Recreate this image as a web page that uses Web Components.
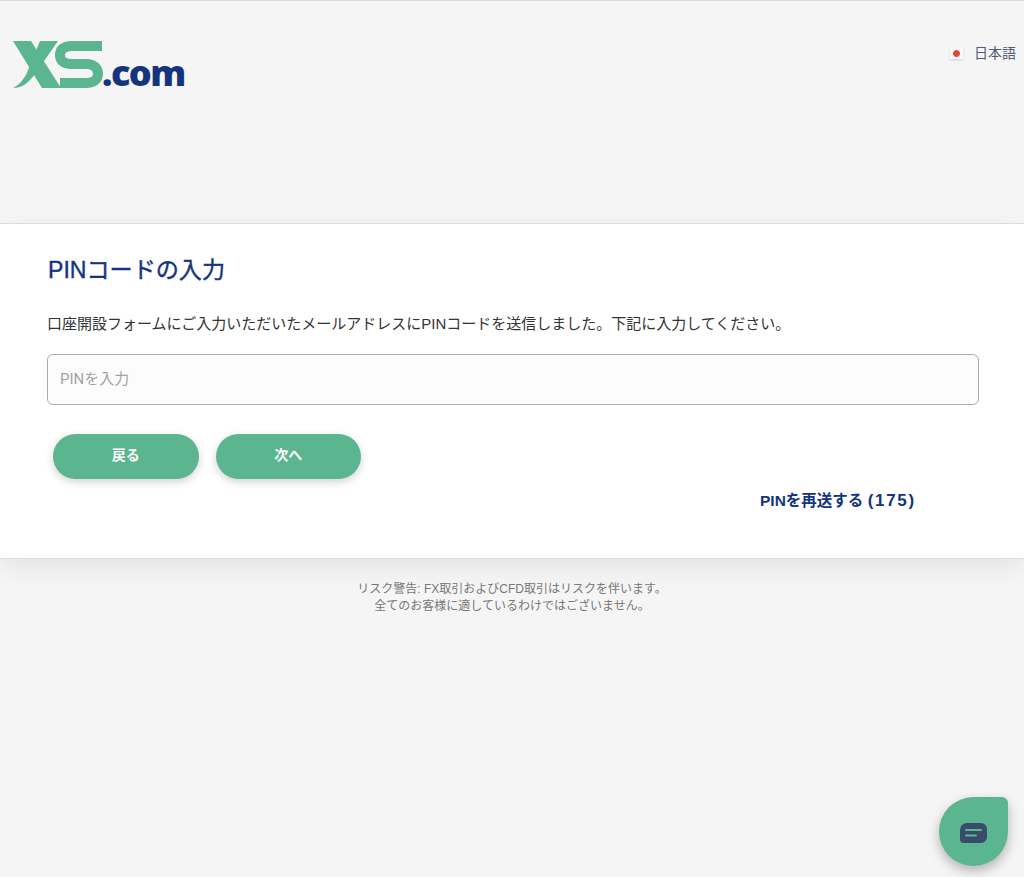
<!DOCTYPE html>
<html lang="ja">
<head>
<meta charset="utf-8">
<title>PIN</title>
<style>
  html, body { margin: 0; height: 100%; }
  body {
    background: #f5f5f5;
    font-family: "Liberation Sans", "Noto Sans CJK JP", sans-serif;
    overflow: hidden;
  }
</style>
</head>
<body>
<site-header></site-header>
<pin-card></pin-card>
<risk-note>
  <div>リスク警告: FX取引およびCFD取引はリスクを伴います。</div>
  <div>全てのお客様に適しているわけではございません。</div>
</risk-note>
<chat-launcher></chat-launcher>

<script>
class SiteHeader extends HTMLElement {
  constructor() {
    super();
    this.attachShadow({mode: 'open'}).innerHTML = `
      <style>
        :host {
          display: flex;
          justify-content: space-between;
          align-items: flex-start;
          box-sizing: border-box;
          height: 223px;
          border-top: 1px solid #dcdcdc;
          padding: 39px 8px 0 13px;
        }
        .logo { display: flex; align-items: flex-end; height: 50px; }
        .logo svg { display: block; }
        .com {
          font: 800 36px/1 "Open Sans", sans-serif;
          letter-spacing: -1.500px;
          color: #14357e;
          margin: 0 0 -1px -1px;
        }
        .lang {
          display: flex;
          align-items: center;
          gap: 11px;
          margin-top: 4px;
          font-size: 14px;
          line-height: 18px;
          color: #4f5b78;
        }
        .flag {
          width: 13px;
          height: 11px;
          background: radial-gradient(circle at center, #e8443e 0 3px, #fafafa 3.800px);
          box-shadow: 0 1px 2px rgba(0, 0, 0, .16);
        }
      </style>
      <div class="logo">
        <svg width="90" height="50" viewBox="0 0 90 50" role="img" aria-label="XS">
          <g fill="#5bb58f">
            <path d="M0 1H18L48 48H29Z"/>
            <path d="M27 1H45L22 34C16 42 10 48 0 48C6 45 9 41 13 35Z"/>
          </g>
          <path fill="none" stroke="#5bb58f" stroke-width="10" d="M89 6H59C50 6 47 10 47 15C47 21 51 24 59 24H73C81 24 85 28 85 34C85 39 81 43 73 43H47"/>
        </svg>
        <span class="com">.com</span>
      </div>
      <div class="lang"><span class="flag"></span><span>日本語</span></div>
    `;
  }
}

class GreenButton extends HTMLElement {
  constructor() {
    super();
    this.attachShadow({mode: 'open'}).innerHTML = `
      <style>
        :host {
          display: flex;
          align-items: center;
          justify-content: center;
          box-sizing: border-box;
          width: 145.500px;
          height: 45px;
          padding-bottom: 5px;
          border-radius: 23px;
          background: #5bb58f;
          color: #fff;
          font-size: 14px;
          font-weight: 700;
          box-shadow: 0 3px 8px rgba(0, 0, 0, .18);
          cursor: pointer;
        }
      </style>
      <slot></slot>
    `;
  }
}

class PinCard extends HTMLElement {
  constructor() {
    super();
    this.attachShadow({mode: 'open'}).innerHTML = `
      <style>
        :host {
          display: block;
          box-sizing: border-box;
          height: 336px;
          padding: 31px 45px 0 47px;
          background: #fff;
          border-top: 1px solid #dcdcdc;
          border-bottom: 1px solid #dcdcdc;
          box-shadow: 0 8px 24px rgba(0, 0, 0, .07);
        }
        h1 {
          margin: 0 0 0 1px;
          font-size: 23.100px;
          line-height: 30px;
          font-weight: 400;
          color: #14357e;
          -webkit-text-stroke: .4px #14357e;
        }
        p {
          margin: 27px 0 0;
          font-size: 15px;
          line-height: 24px;
          color: #333;
          white-space: nowrap;
        }
        input {
          display: block;
          box-sizing: border-box;
          width: 100%;
          height: 51px;
          margin-top: 18px;
          padding: 0 12px 1px;
          border: 1px solid #ababab;
          border-radius: 6px;
          background: #fcfcfc;
          font: 15px "Roboto", "Noto Sans CJK JP", sans-serif;
          color: #333;
          outline: none;
        }
        input::placeholder { color: #a3a3a3; opacity: 1; }
        .buttons { display: flex; gap: 17px; margin: 29px 0 0 6px; }
        .resend {
          display: block;
          margin: 12px 0 0 713px;
          font-size: 15.500px;
          line-height: 20px;
          font-weight: 700;
          color: #14357e;
          white-space: nowrap;
          text-decoration: none;
        }
        .resend span { font-size: 17px; letter-spacing: 1.700px; }
      </style>
      <h1>PINコードの入力</h1>
      <p>口座開設フォームにご入力いただいたメールアドレスにPINコードを送信しました。下記に入力してください。</p>
      <input type="text" placeholder="PINを入力">
      <div class="buttons">
        <green-button>戻る</green-button>
        <green-button>次へ</green-button>
      </div>
      <a class="resend" href="#">PINを再送する <span>(175)</span></a>
    `;
  }
}

class RiskNote extends HTMLElement {
  constructor() {
    super();
    this.attachShadow({mode: 'open'}).innerHTML = `
      <style>
        :host {
          display: block;
          padding-top: 22px;
          text-align: center;
          font-size: 12px;
          line-height: 17px;
          color: #777;
        }
      </style>
      <slot></slot>
    `;
  }
}

class ChatLauncher extends HTMLElement {
  constructor() {
    super();
    this.attachShadow({mode: 'open'}).innerHTML = `
      <style>
        :host {
          position: fixed;
          left: 939px;
          top: 797px;
          width: 69px;
          height: 69px;
          display: flex;
          align-items: center;
          justify-content: center;
          background: #5bb58f;
          border-radius: 50% 6px 50% 50%;
          box-shadow: 0 5px 12px rgba(0, 0, 0, .28);
          cursor: pointer;
        }
        svg { display: block; margin-top: 2px; }
      </style>
      <svg width="27" height="20" viewBox="0 0 27 20" aria-hidden="true">
        <path fill="#3a4a6b" d="M7 0h14a6 6 0 0 1 6 6v8a6 6 0 0 1-6 6H4a4 4 0 0 1-4-4V7a7 7 0 0 1 7-7z"/>
        <path fill="none" stroke="#5bb58f" stroke-width="2" stroke-linecap="round" d="M6 7h15M6 12.500h10"/>
      </svg>
    `;
  }
}

customElements.define('site-header', SiteHeader);
customElements.define('green-button', GreenButton);
customElements.define('pin-card', PinCard);
customElements.define('risk-note', RiskNote);
customElements.define('chat-launcher', ChatLauncher);
</script>
</body>
</html>
